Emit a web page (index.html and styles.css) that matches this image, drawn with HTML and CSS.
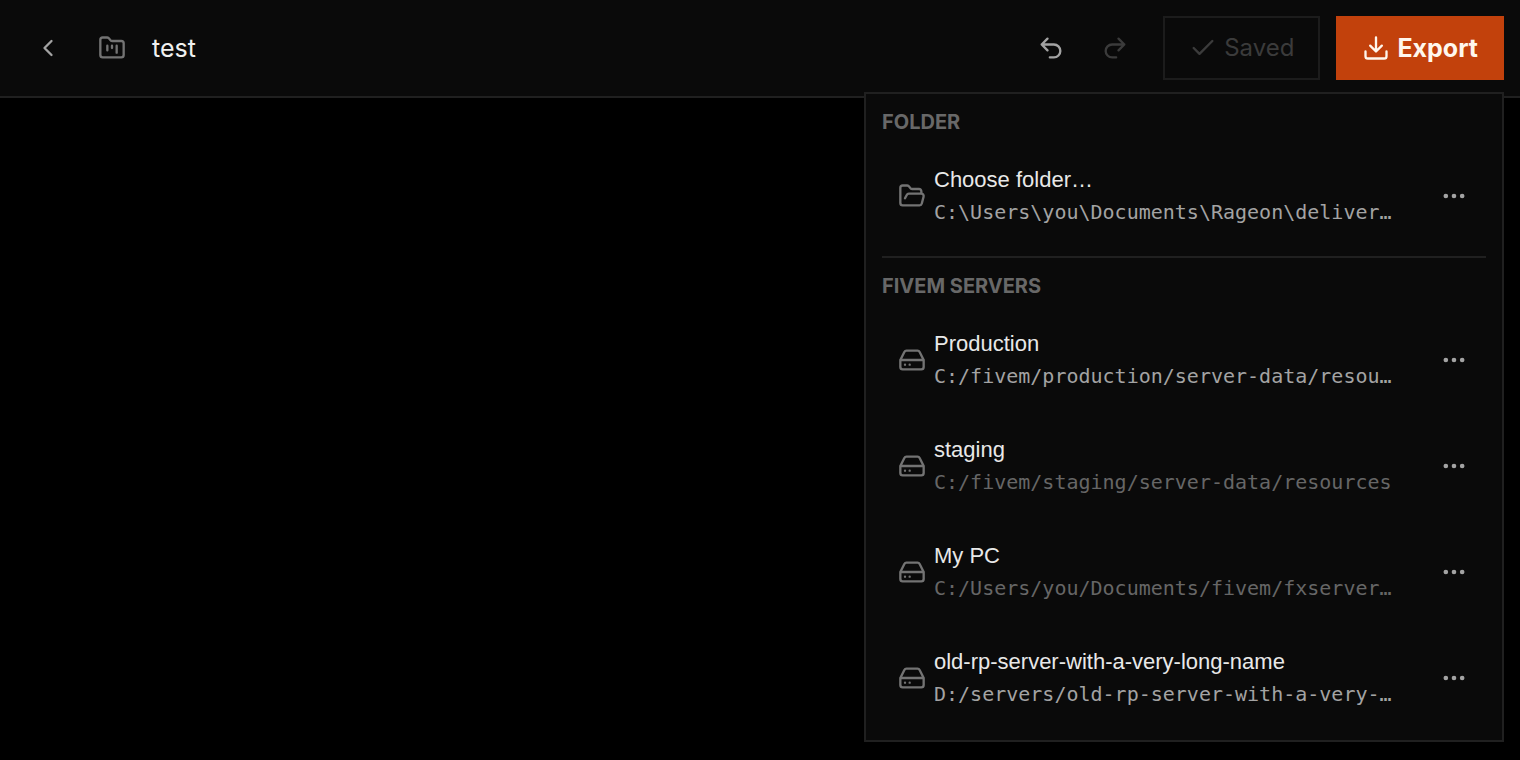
FILE: index.html
```html
<!DOCTYPE html>
<html lang="en">
<head>
<meta charset="utf-8">
<meta name="viewport" content="width=device-width, initial-scale=1">
<title>test</title>
<link rel="stylesheet" href="styles.css">
</head>
<body>
<svg class="sprite" aria-hidden="true">
  <symbol id="drive" viewBox="0 0 24 24"><path d="M22 12H2M5.45 5.11 2 12v6a2 2 0 0 0 2 2h16a2 2 0 0 0 2-2v-6l-3.45-6.89A2 2 0 0 0 16.76 4H7.24a2 2 0 0 0-1.79 1.11zM6 16h.01M10 16h.01"/></symbol>
  <symbol id="more" viewBox="0 0 24 24"><circle cx="12" cy="12" r="1"/><circle cx="19" cy="12" r="1"/><circle cx="5" cy="12" r="1"/></symbol>
</svg>
<header class="topbar">
  <button class="icon-button" aria-label="Back"><svg class="icon" viewBox="0 0 24 24"><path d="m15 18-6-6 6-6"/></svg></button>
  <div class="project">
    <svg class="icon icon-muted" viewBox="0 0 24 24"><path d="M4 20h16a2 2 0 0 0 2-2V8a2 2 0 0 0-2-2h-7.93a2 2 0 0 1-1.66-.9l-.82-1.2A2 2 0 0 0 7.93 3H4a2 2 0 0 0-2 2v13c0 1.1.9 2 2 2ZM8 10v4M12 10v2M16 10v6"/></svg>
    <h1 class="project-name">test</h1>
  </div>
  <div class="history">
    <button class="icon-button" aria-label="Undo"><svg class="icon" viewBox="0 0 24 24"><path d="M9 14 4 9l5-5M4 9h10.5a5.5 5.5 0 0 1 0 11H11"/></svg></button>
    <button class="icon-button" aria-label="Redo" disabled><svg class="icon" viewBox="0 0 24 24"><path d="m15 14 5-5-5-5M20 9H9.500a5.500 5.500 0 0 0 0 11H13"/></svg></button>
  </div>
  <button class="button button-saved" disabled><svg class="icon" viewBox="0 0 24 24"><path d="M20 6 9 17l-5-5"/></svg>Saved</button>
  <div class="export">
    <button class="button button-export" aria-expanded="true"><svg class="icon" viewBox="0 0 24 24"><path d="M12 15V3M21 15v4a2 2 0 0 1-2 2H5a2 2 0 0 1-2-2v-4M7 10l5 5 5-5"/></svg>Export</button>
    <div class="menu">
      <section class="group">
        <h2 class="group-title">FOLDER</h2>
        <div class="row">
          <button class="target">
            <svg class="icon icon-muted" viewBox="0 0 24 24"><path d="m6 14 1.500-2.900A2 2 0 0 1 9.240 10H20a2 2 0 0 1 1.940 2.500l-1.540 6a2 2 0 0 1-1.950 1.500H4a2 2 0 0 1-2-2V5a2 2 0 0 1 2-2h3.900a2 2 0 0 1 1.690.9l.81 1.200a2 2 0 0 0 1.670.9H18a2 2 0 0 1 2 2v2"/></svg>
            <span class="details"><span class="name">Choose folder…</span><span class="path">C:\Users\you\Documents\Rageon\deliver…</span></span>
          </button>
          <button class="icon-button" aria-label="Folder options"><svg class="icon"><use href="#more"/></svg></button>
        </div>
      </section>
      <section class="group">
        <h2 class="group-title">FIVEM SERVERS</h2>
        <div class="row">
          <button class="target">
            <svg class="icon icon-muted"><use href="#drive"/></svg>
            <span class="details"><span class="name">Production</span><span class="path">C:/fivem/production/server-data/resou…</span></span>
          </button>
          <button class="icon-button" aria-label="Production options"><svg class="icon"><use href="#more"/></svg></button>
        </div>
        <div class="row">
          <button class="target">
            <svg class="icon icon-muted"><use href="#drive"/></svg>
            <span class="details"><span class="name">staging</span><span class="path path-dim">C:/fivem/staging/server-data/resources</span></span>
          </button>
          <button class="icon-button" aria-label="staging options"><svg class="icon"><use href="#more"/></svg></button>
        </div>
        <div class="row">
          <button class="target">
            <svg class="icon icon-muted"><use href="#drive"/></svg>
            <span class="details"><span class="name">My PC</span><span class="path path-dim">C:/Users/you/Documents/fivem/fxserver…</span></span>
          </button>
          <button class="icon-button" aria-label="My PC options"><svg class="icon"><use href="#more"/></svg></button>
        </div>
        <div class="row">
          <button class="target">
            <svg class="icon icon-muted"><use href="#drive"/></svg>
            <span class="details"><span class="name">old-rp-server-with-a-very-long-name</span><span class="path">D:/servers/old-rp-server-with-a-very-…</span></span>
          </button>
          <button class="icon-button" aria-label="old-rp-server options"><svg class="icon"><use href="#more"/></svg></button>
        </div>
      </section>
    </div>
  </div>
</header>
<main class="canvas"></main>
</body>
</html>
```
FILE: styles.css
```css
* { box-sizing: border-box; }
body {
  margin: 0;
  min-height: 100vh;
  display: flex;
  flex-direction: column;
  background: #000;
  color: #e8e8e8;
  font-family: Inter, "Liberation Sans", sans-serif;
}
h1, h2 { margin: 0; }
button {
  padding: 0;
  border: 0;
  background: none;
  color: inherit;
  font: inherit;
}
.sprite { display: none; }
.icon {
  flex: none;
  width: 28px;
  height: 28px;
  fill: none;
  stroke: currentColor;
  stroke-width: 2;
  stroke-linecap: round;
  stroke-linejoin: round;
}
.icon-muted { color: #737373; }
.topbar {
  display: flex;
  align-items: center;
  padding: 16px;
  background: #0a0a0a;
  border-bottom: 2px solid #202020;
}
.icon-button {
  flex: none;
  display: flex;
  align-items: center;
  justify-content: center;
  width: 64px;
  height: 64px;
  color: #a3a3a3;
}
.icon-button:disabled { color: #3b3b3b; }
.project {
  flex: 1;
  min-width: 0;
  display: flex;
  align-items: center;
  gap: 26px;
  padding-left: 18px;
}
.project-name {
  color: #f0f0f0;
  font-size: 25px;
  line-height: 32px;
  font-weight: 400;
}
.history { display: flex; margin-right: 16px; }
.button {
  display: flex;
  align-items: center;
  gap: 7px;
  height: 64px;
  padding: 0 26px;
  font-size: 25px;
  line-height: 32px;
}
.button-saved {
  padding: 0 24px;
  border: 2px solid #1c1c1c;
  color: #3b3b3b;
  font-size: 24px;
}
.button-export {
  background: #c2410c;
  color: #fff7ed;
  font-weight: 700;
}
.export { position: relative; margin-left: 16px; }
.menu {
  position: absolute;
  z-index: 1;
  top: calc(100% + 12px);
  right: 0;
  width: 640px;
  padding: 0 16px 9px;
  background: #0a0a0a;
  border: 2px solid #202020;
}
.group + .group {
  margin-top: 7px;
  border-top: 2px solid #202020;
}
.group-title {
  padding: 16px 0 9px;
  color: #686868;
  font-size: 20px;
  line-height: 24px;
  font-weight: 700;
}
.row {
  display: flex;
  align-items: center;
  height: 106px;
}
.target {
  flex: 1;
  min-width: 0;
  display: flex;
  align-items: center;
  gap: 8px;
  padding-left: 16px;
  text-align: left;
}
.details { min-width: 0; }
.name, .path {
  display: block;
  overflow: hidden;
  white-space: nowrap;
  text-overflow: ellipsis;
  line-height: 32px;
}
.name {
  font-family: "Liberation Sans", Arial, sans-serif;
  font-size: 22px;
}
.path {
  color: #a3a3a3;
  font-family: "DejaVu Sans Mono", "Liberation Mono", monospace;
  font-size: 20px;
}
.path-dim { color: #666; }
.canvas { flex: 1; }
```
